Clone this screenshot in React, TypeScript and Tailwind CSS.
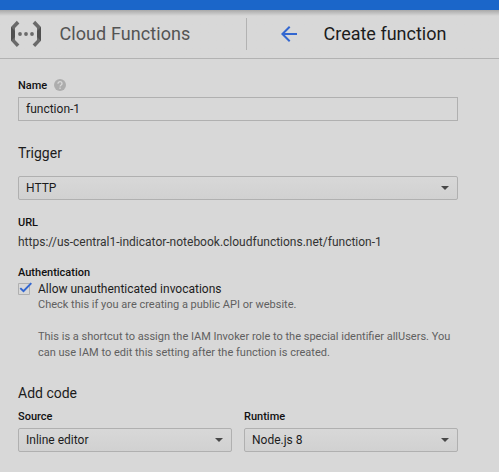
import React from "react";

function Select({ value, className }: { value: string; className: string }) {
  return (
    <button
      type="button"
      className={`flex h-6 items-center justify-between rounded-[2px] border border-[#b0b0b0] bg-linear-to-b from-[#d8d8d8] to-[#d1d1d1] pr-2 pl-[7px] text-[12px] leading-4 text-[#1c1c1c] ${className}`}
    >
      <span>{value}</span>
      <svg width="8" height="4" viewBox="0 0 8 4" className="fill-[#484848]">
        <path d="M0 0h8L4 4z" />
      </svg>
    </button>
  );
}

function Label({ children }: { children: React.ReactNode }) {
  return <div className="pt-0.5 text-[11px] leading-[14px] font-medium text-[#111]">{children}</div>;
}

export default function App() {
  return (
    <div className="h-[472px] w-[499px] overflow-hidden bg-[#d8d8d8] font-[Roboto,sans-serif] text-[#1c1c1c]">
      <div className="h-[10px] bg-[#1b66c9]" />
      <header className="flex h-[49px] items-center border-b border-[#b2b2b2] bg-linear-to-b from-[#a9a9a9] to-[#d8d8d8] to-[6px] pl-[11px]">
        <svg width="30" height="28" viewBox="0 0 30 28" fill="none" className="shrink-0">
          <g fill="#6a6a6a">
            <path d="M5.8.8 8.4 3.4 4 8v12l4.4 4.4L5.8 27 0 20.8V7z" />
            <path d="M24.2.8 21.6 3.4 26 8v12l-4.4 4.4 2.6 2.6 5.8-6.2V7z" />
            <circle cx="9" cy="14" r="1.9" />
            <circle cx="15" cy="14" r="1.9" />
            <circle cx="21" cy="14" r="1.9" />
          </g>
          <path d="M0 7l4 4v6l-4 3.8zM30 7l-4 4v6l4 3.8z" fill="#505050" />
        </svg>
        <span className="ml-[18.5px] w-[186.5px] text-[18px] leading-6 tracking-[0.08px] whitespace-nowrap text-[#545454]">Cloud Functions</span>
        <div className="h-8 w-px bg-[#b2b2b2]" />
        <svg width="16" height="16" viewBox="0 0 16 16" fill="none" className="ml-[34px]" stroke="#3367d0" strokeWidth="2">
          <path d="M16 8H2M8.7 .7 1.4 8l7.3 7.3" />
        </svg>
        <h1 className="ml-[26.5px] text-[18px] leading-6 whitespace-nowrap text-[#1c1c1c]">Create function</h1>
      </header>
      <main className="w-[476px] pt-[18px] pl-[18px]">
        <div className="flex items-center gap-[7px]">
          <Label>Name</Label>
          <svg width="12" height="12" viewBox="0 0 12 12">
            <circle cx="6" cy="6" r="6" fill="#adadad" />
            <path d="M4 4.7c0-2.7 4-2.6 4 0C8 6 6.1 6 6.1 7.5" fill="none" stroke="#d8d8d8" strokeWidth="1.3" />
            <path d="M5.4 8.6h1.3v1.3H5.4z" fill="#d8d8d8" />
          </svg>
        </div>
        <div className="mt-1 flex h-6 w-[440px] items-center border border-[#b0b0b0] pl-[7px] text-[12px] leading-4">function-1</div>
        <h2 className="mt-[22px] text-[14px] leading-5">Trigger</h2>
        <Select value="HTTP" className="mt-[13px] w-[440px]" />
        <div className="mt-[14px]">
          <Label>URL</Label>
        </div>
        <div className="mt-1 text-[12px] leading-4 text-[#333]">https://us-central1-indicator-notebook.cloudfunctions.net/function-1</div>
        <div className="mt-[14px]">
          <Label>Authentication</Label>
        </div>
        <div className="mt-px flex">
          <svg width="14" height="14" viewBox="0 0 14 14" fill="none" className="mt-px shrink-0">
            <path d="M.5 1.5h11v11H.5z" stroke="#b0b0b0" />
            <path d="M2.3 6.1 5.5 9.2 13.3 1.1" stroke="#3367d0" strokeWidth="2" />
          </svg>
          <div className="ml-[6px]">
            <div className="text-[12px] leading-4">Allow unauthenticated invocations</div>
            <div className="text-[11px] leading-4 whitespace-nowrap text-[#606060]">
              <p>Check this if you are creating a public API or website.</p>
              <p className="mt-4">
                This is a shortcut to assign the IAM Invoker role to the special identifier allUsers. You
                <br />
                can use IAM to edit this setting after the function is created.
              </p>
            </div>
          </div>
        </div>
        <h2 className="mt-[22px] text-[14px] leading-5">Add code</h2>
        <div className="mt-[5px] flex gap-3">
          <div>
            <Label>Source</Label>
            <Select value="Inline editor" className="mt-1 w-[214px]" />
          </div>
          <div>
            <Label>Runtime</Label>
            <Select value="Node.js 8" className="mt-1 w-[214px]" />
          </div>
        </div>
      </main>
    </div>
  );
}
